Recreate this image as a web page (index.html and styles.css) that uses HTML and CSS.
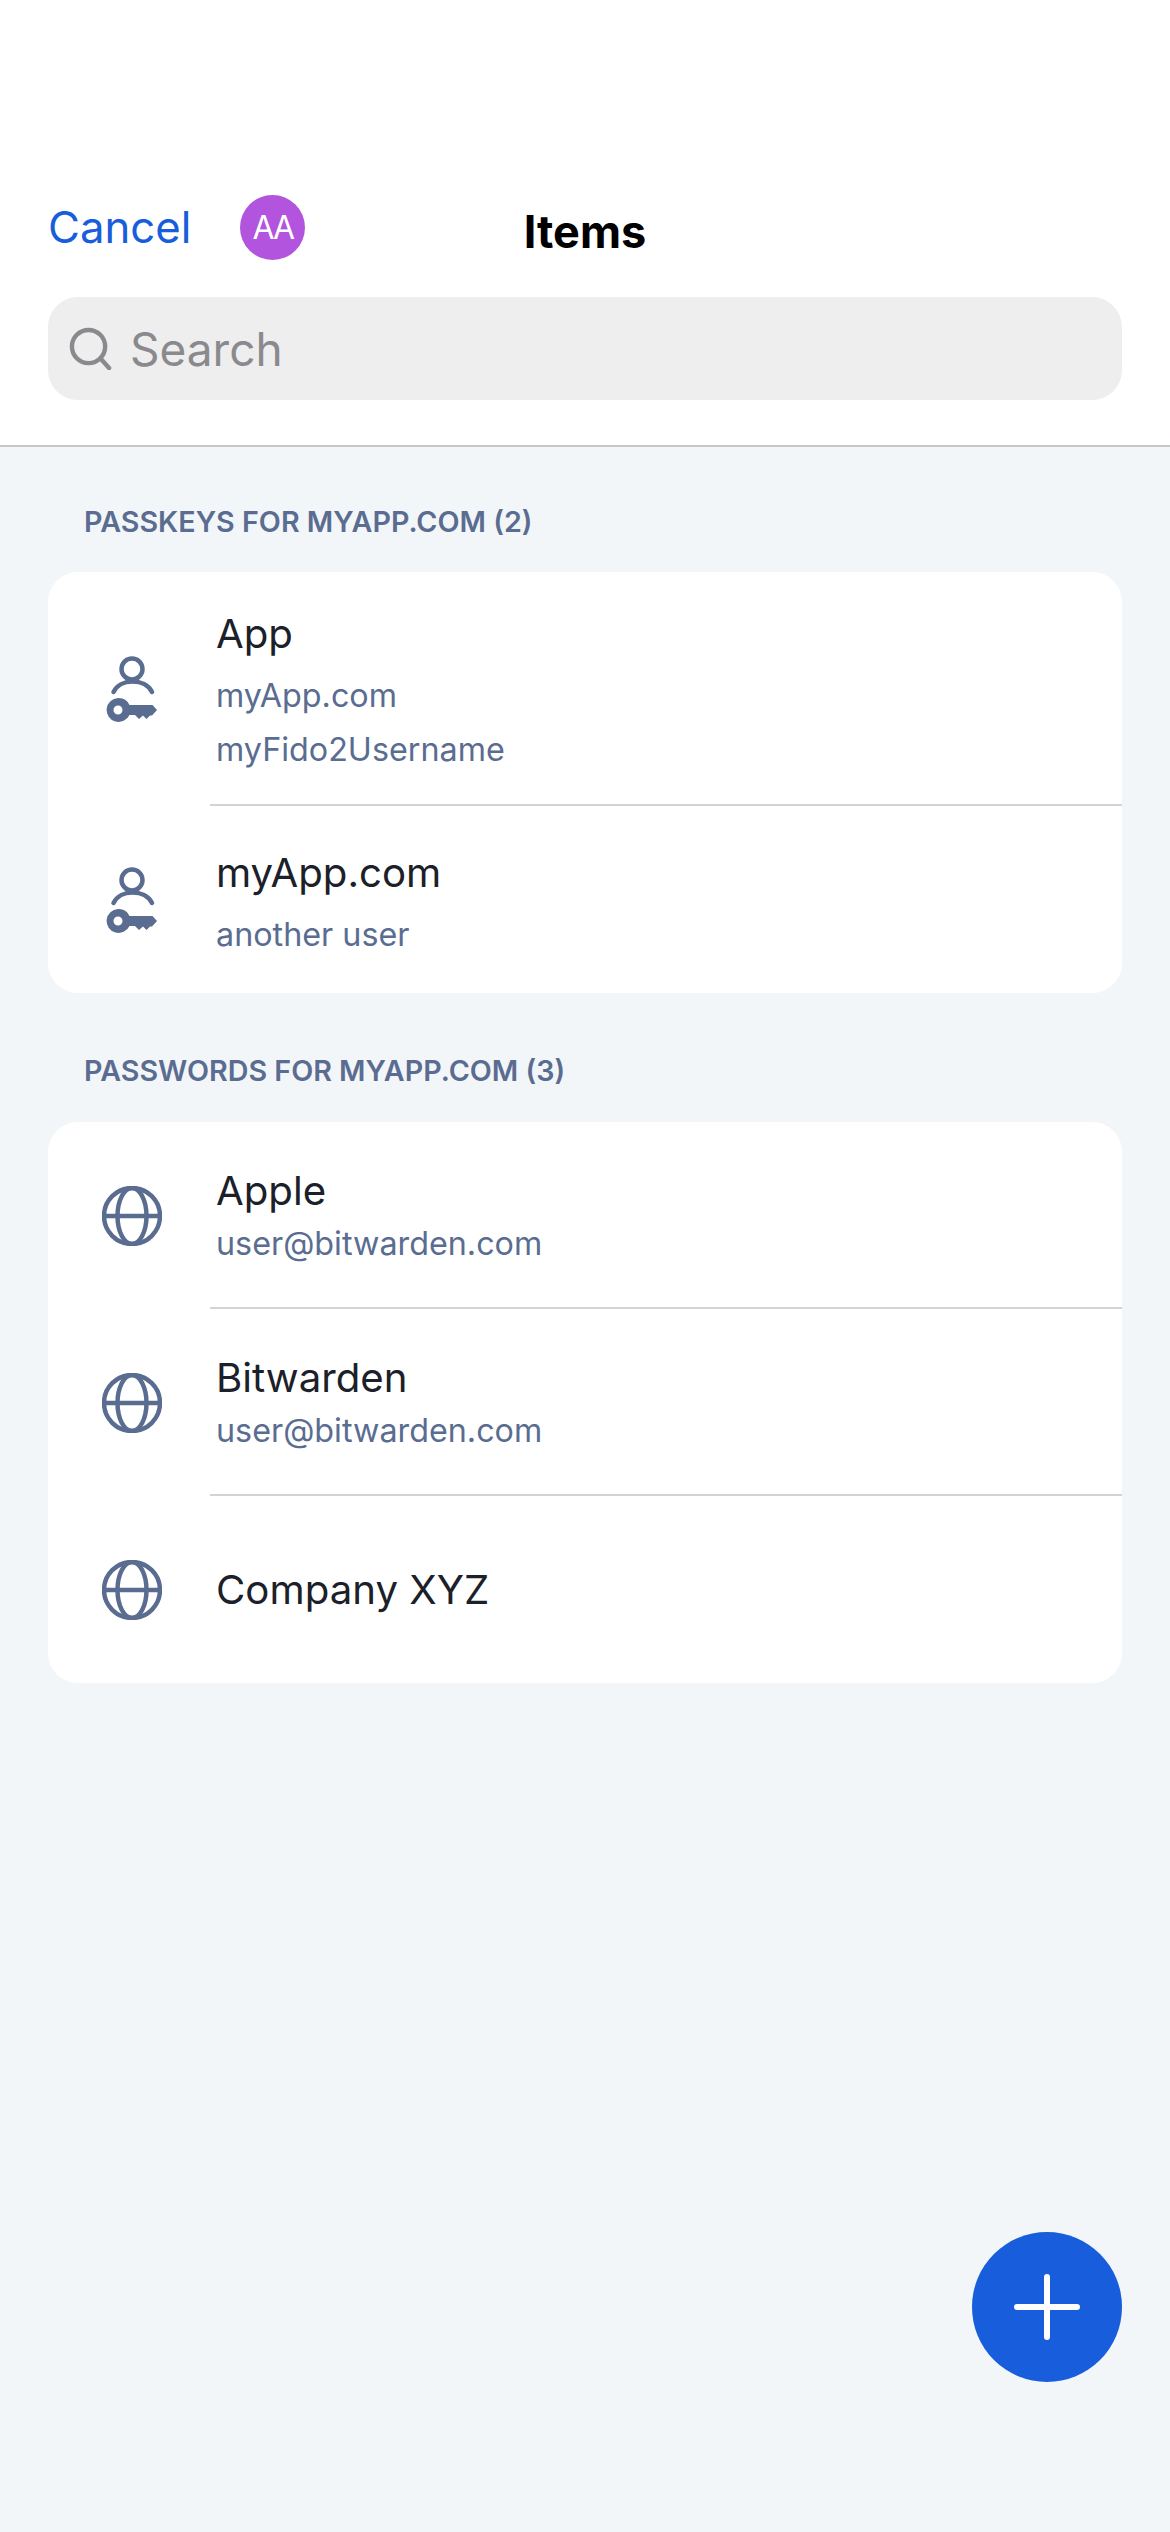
FILE: index.html
```html
<!DOCTYPE html>
<html lang="en">
<head>
    <meta charset="UTF-8">
    <meta name="viewport" content="width=device-width, initial-scale=1.0">
    <title>Items</title>
    <link rel="stylesheet" href="styles.css">
</head>
<body>
    <div class="page">
        <!-- Header -->
        <header class="header">
            <div class="nav">
                <div class="nav-left">
                    <span class="cancel">Cancel</span>
                    <span class="avatar">AA</span>
                </div>
                <h1 class="nav-title">Items</h1>
            </div>
            <div class="search">
                <svg class="search-icon" viewBox="0 0 44 44" width="43" height="43">
                    <circle cx="20" cy="20" r="17" fill="none" stroke="#8a8a8e" stroke-width="4.5"/>
                    <path d="M32 32 L41 42" fill="none" stroke="#8a8a8e" stroke-width="4.5" stroke-linecap="round"/>
                </svg>
                <span class="search-text">Search</span>
            </div>
        </header>

        <main class="content">
            <!-- Passkeys -->
            <h2 class="section-title">PASSKEYS FOR MYAPP.COM (2)</h2>
            <section class="card">
                <div class="row row-passkey">
                    <span class="row-icon">
                        <svg viewBox="0 0 60 70" width="60" height="70"><use href="#icon-passkey"/></svg>
                    </span>
                    <div class="row-body">
                        <div class="row-title">App</div>
                        <div class="row-sub">myApp.com</div>
                        <div class="row-sub">myFido2Username</div>
                    </div>
                </div>
                <div class="row row-passkey">
                    <span class="row-icon">
                        <svg viewBox="0 0 60 70" width="60" height="70"><use href="#icon-passkey"/></svg>
                    </span>
                    <div class="row-body">
                        <div class="row-title">myApp.com</div>
                        <div class="row-sub">another user</div>
                    </div>
                </div>
            </section>

            <!-- Passwords -->
            <h2 class="section-title">PASSWORDS FOR MYAPP.COM (3)</h2>
            <section class="card">
                <div class="row row-login">
                    <span class="row-icon">
                        <svg viewBox="0 0 60 60" width="60" height="60"><use href="#icon-globe"/></svg>
                    </span>
                    <div class="row-body">
                        <div class="row-title">Apple</div>
                        <div class="row-sub">user@bitwarden.com</div>
                    </div>
                </div>
                <div class="row row-login">
                    <span class="row-icon">
                        <svg viewBox="0 0 60 60" width="60" height="60"><use href="#icon-globe"/></svg>
                    </span>
                    <div class="row-body">
                        <div class="row-title">Bitwarden</div>
                        <div class="row-sub">user@bitwarden.com</div>
                    </div>
                </div>
                <div class="row">
                    <span class="row-icon">
                        <svg viewBox="0 0 60 60" width="60" height="60"><use href="#icon-globe"/></svg>
                    </span>
                    <div class="row-body">
                        <div class="row-title">Company XYZ</div>
                    </div>
                </div>
            </section>
        </main>

        <button class="fab" type="button" aria-label="Add">
            <svg viewBox="0 0 66 66" width="66" height="66">
                <path d="M33 3 V63 M3 33 H63" fill="none" stroke="#fff" stroke-width="6" stroke-linecap="round"/>
            </svg>
        </button>
    </div>

    <!-- Shared icons -->
    <svg class="icon-defs" width="0" height="0">
        <defs>
            <g id="icon-passkey">
                <circle cx="30" cy="15" r="10.5" fill="none" stroke="#5a6d91" stroke-width="4.5"/>
                <path d="M11.5 38 C18 24 43 24 50 38" fill="none" stroke="#5a6d91" stroke-width="4.5" stroke-linecap="round"/>
                <path fill="#5a6d91" fill-rule="evenodd" d="M16 44 A12 12 0 1 0 27.5 61 H33 L37 65 L41 61.5 L44.5 65 L48 61.5 H50 L55 56 L50.5 51 H27.5 A12 12 0 0 0 16 44 Z M16 51.5 A4.5 4.5 0 1 1 16 60.5 A4.5 4.5 0 1 1 16 51.5 Z"/>
            </g>
            <g id="icon-globe" fill="none" stroke="#5a6d91" stroke-width="4.5">
                <circle cx="30" cy="30" r="28"/>
                <ellipse cx="30" cy="30" rx="14.5" ry="28"/>
                <path d="M2 30 H58"/>
            </g>
        </defs>
    </svg>
</body>
</html>
```

FILE: styles.css
```css
* {
    box-sizing: border-box;
}
html, body {
    margin: 0;
    height: 100%;
}
body {
    font-family: Inter, "Liberation Sans", sans-serif;
    background-color: #f3f6f9;
}
.page {
    position: relative;
    height: 2532px;
    overflow: hidden;
}
.header {
    height: 447px;
    padding: 195px 48px 0;
    background: white;
    border-bottom: 2px solid #c6c7c9;
}
.nav {
    position: relative;
    display: flex;
    justify-content: center;
    height: 65px;
}
.nav-left {
    position: absolute;
    left: 0;
    top: 0;
    display: flex;
    align-items: center;
    gap: 49px;
}
.cancel {
    font-size: 43.7px;
    color: #175ddc;
    line-height: 65px;
}
.avatar {
    width: 65px;
    height: 65px;
    border-radius: 50%;
    background-color: #b254dd;
    color: white;
    font-size: 32px;
    letter-spacing: -2px;
    line-height: 65px;
    text-align: center;
}
.nav-title {
    margin: 0;
    font-size: 45px;
    font-weight: 700;
    line-height: 74px;
    color: #000;
}
.search {
    display: flex;
    align-items: center;
    gap: 18px;
    height: 103px;
    margin-top: 37px;
    padding-left: 21px;
    background-color: #eeeeef;
    border-radius: 30px;
}
.search-text {
    font-size: 46px;
    color: #8a8a8e;
}
.content {
    padding: 0 48px;
}
.section-title {
    margin: 0;
    padding: 51px 36px 26px;
    font-size: 28.7px;
    font-weight: 600;
    line-height: 48px;
    color: #5a6d91;
}
.card + .section-title {
    padding-top: 54px;
    padding-bottom: 27px;
}
.card {
    background: white;
    border-radius: 30px;
    overflow: hidden;
}
.row {
    display: flex;
    align-items: center;
    min-height: 187px;
}
.row-icon {
    display: flex;
    justify-content: center;
    flex: none;
    width: 168px;
    margin-right: -6px;
}
.row-body {
    flex: 1;
    align-self: stretch;
    display: flex;
    flex-direction: column;
    justify-content: center;
    padding-left: 6px;
    border-bottom: 2px solid #d3d3d5;
}
.row:last-child .row-body {
    border-bottom: none;
}
.row-title {
    font-size: 40.2px;
    line-height: 52px;
    color: #1b2029;
}
.row-sub {
    font-size: 32.3px;
    line-height: 54px;
    color: #5a6d91;
}
.row-passkey .row-body {
    padding-top: 36px;
    padding-bottom: 27px;
}
.row-passkey .row-title {
    margin-bottom: 9px;
}
.row-login .row-body {
    padding-top: 7px;
}
.fab {
    position: absolute;
    right: 48px;
    bottom: 150px;
    display: flex;
    align-items: center;
    justify-content: center;
    width: 150px;
    height: 150px;
    padding: 0;
    border: none;
    border-radius: 50%;
    background-color: #175ddc;
}
.icon-defs {
    position: absolute;
}
```
